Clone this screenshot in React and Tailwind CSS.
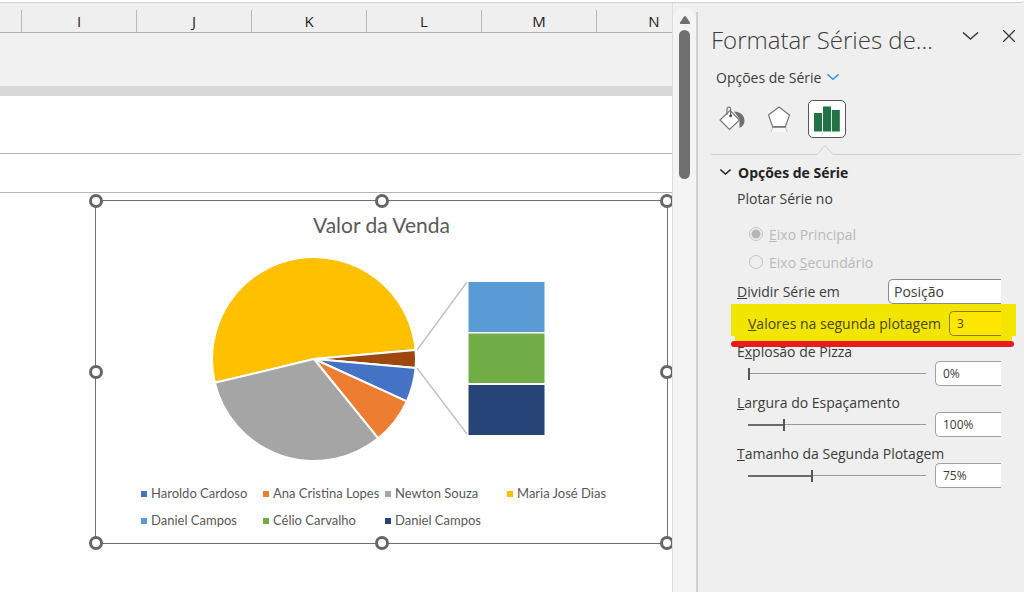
import React, { useState } from "react";

const columns = ["I", "J", "K", "L", "M", "N"];

const slices = [
  { name: "Maria José Dias", color: "#ffc000", from: 166.5, to: 355 },
  { name: "Outros", color: "#9e480e", from: -5, to: 5 },
  { name: "Haroldo Cardoso", color: "#4472c4", from: 5, to: 24.5 },
  { name: "Ana Cristina Lopes", color: "#ed7d31", from: 24.5, to: 51 },
  { name: "Newton Souza", color: "#a5a5a5", from: 51, to: 166.5 },
];

const legend = [
  { name: "Haroldo Cardoso", color: "bg-[#4472c4]" },
  { name: "Ana Cristina Lopes", color: "bg-[#ed7d31]" },
  { name: "Newton Souza", color: "bg-[#a5a5a5]" },
  { name: "Maria José Dias", color: "bg-[#ffc000]" },
  { name: "Daniel Campos", color: "bg-[#5b9bd5]" },
  { name: "Célio Carvalho", color: "bg-[#70ad47]" },
  { name: "Daniel Campos", color: "bg-[#264478]" },
];

const handles = [
  "left-0 top-0",
  "left-1/2 top-0",
  "left-full top-0",
  "left-0 top-1/2",
  "left-full top-1/2",
  "left-0 top-full",
  "left-1/2 top-full",
  "left-full top-full",
];

function slicePath(from, to) {
  const cx = 218;
  const cy = 110;
  const r = 102;
  const point = (deg) => {
    const a = (deg * Math.PI) / 180;
    return `${cx + r * Math.cos(a)} ${cy + r * Math.sin(a)}`;
  };
  const large = to - from > 180 ? 1 : 0;
  return `M${cx} ${cy} L${point(from)} A${r} ${r} 0 ${large} 1 ${point(to)} Z`;
}

function Chart() {
  return (
    <div className="relative mt-[7px] ml-[95px] mr-1 h-[344px] border border-[#707070] bg-white font-[Lato,sans-serif] text-[#595959]">
      <h2 className="mt-2 text-center text-[21px] leading-8">
        Valor da Venda
      </h2>
      <svg
        viewBox="0 0 571 220"
        className="mt-2 block h-[220px] w-full"
        role="img"
        aria-label="Valor da Venda"
      >
        {slices.map((s) => (
          <path
            key={s.name}
            d={slicePath(s.from, s.to)}
            fill={s.color}
            stroke="#fff"
            strokeWidth="2"
            strokeLinejoin="round"
          />
        ))}
        <path
          d="M321 101 L371 33 M321 119 L371 185"
          stroke="#bfbfbf"
          strokeWidth="1.3"
          fill="none"
        />
        <rect x="372.5" y="33" width="76" height="50" fill="#5b9bd5" />
        <rect x="372.5" y="84.5" width="76" height="49.5" fill="#70ad47" />
        <rect x="372.5" y="136" width="76" height="50" fill="#264478" />
      </svg>
      <ul className="ml-[45px] mt-[11px] grid grid-cols-[repeat(4,122px)] text-[13px] leading-[27px]">
        {legend.map((item, i) => (
          <li key={i} className="flex items-center gap-1 whitespace-nowrap">
            <span className={`size-[6px] shrink-0 ${item.color}`} />
            {item.name}
          </li>
        ))}
      </ul>
      {/* Selection handles */}
      {handles.map((pos) => (
        <span
          key={pos}
          className={`absolute size-[14px] -translate-1/2 rounded-full border-[3px] border-[#666] bg-white ${pos}`}
        />
      ))}
    </div>
  );
}

function Sheet() {
  return (
    <main className="min-w-0 flex-1 overflow-hidden border-r border-[#dcdcdc] bg-white">
      <div className="flex h-[30px] items-end overflow-hidden border-b border-[#b0b0b0] bg-[#efefef]">
        <div className="w-[21px] shrink-0" />
        {columns.map((c) => (
          <div
            key={c}
            className="h-[22px] w-[115px] shrink-0 border-l border-[#b8b8b8] text-center font-['Open_Sans',sans-serif] text-[15px] leading-[23px] text-[#222]"
          >
            {c}
          </div>
        ))}
      </div>
      <div className="h-[53px] bg-[#f1f1f1]" />
      <div className="h-[10px] bg-[#d8d8d8]" />
      <div className="h-[58px] border-b border-[#b5b5b5]" />
      <div className="h-[39px] border-b border-[#b5b5b5]" />
      <Chart />
    </main>
  );
}

function ScrollBar() {
  return (
    <div className="flex w-[23px] shrink-0 flex-col items-center rounded-t-xl bg-[#f4f4f4] pt-[7px]">
      <svg viewBox="0 0 12 10" className="h-[10px] w-3" fill="#707070">
        <path d="M5 1.5 Q6 0.5 7 1.5 L11 7.5 Q11.3 9 10 9 H2 Q0.7 9 1 7.5 Z" />
      </svg>
      <div className="mt-[5px] h-[149px] w-[11px] rounded-full bg-[#707070]" />
    </div>
  );
}

function Chevron({ className }) {
  return (
    <svg
      viewBox="0 0 16 8"
      className={className}
      fill="none"
      stroke="currentColor"
      strokeWidth="1.5"
    >
      <path d="M0.5 0.5 L8 7 L15.5 0.5" vectorEffect="non-scaling-stroke" />
    </svg>
  );
}

function SliderRow({ id, label, min, max, value, unit, onChange }) {
  const pct = ((value - min) / (max - min)) * 100;
  return (
    <div className="mb-2">
      <label htmlFor={id} className="block h-[18px] leading-[18px]">
        {label}
      </label>
      <div className="flex h-[25px] items-center pl-[11px]">
        <input
          id={id}
          type="range"
          min={min}
          max={max}
          value={value}
          onChange={(e) => onChange(Number(e.target.value))}
          style={{ backgroundSize: `${pct}% 2px, 100% 1px` }}
          className="h-3 min-w-0 flex-1 appearance-none bg-[linear-gradient(#6b6b6b,#6b6b6b),linear-gradient(#9a9a9a,#9a9a9a)] bg-[position:left_center] bg-no-repeat [&::-webkit-slider-thumb]:h-3 [&::-webkit-slider-thumb]:w-[2px] [&::-webkit-slider-thumb]:appearance-none [&::-webkit-slider-thumb]:bg-[#555]"
        />
        <input
          type="text"
          aria-label={id}
          value={`${value}${unit}`}
          onChange={(e) => onChange(parseInt(e.target.value) || 0)}
          className="ml-[9px] h-[25px] w-[66px] rounded-l-[5px] border border-r-0 border-[#a0a0a0] bg-white pl-[7px] text-[12px]"
        />
      </div>
    </div>
  );
}

function FormatPane() {
  const [splitBy, setSplitBy] = useState("Posição");
  const [secondPlot, setSecondPlot] = useState("3");
  const [explosion, setExplosion] = useState(0);
  const [gap, setGap] = useState(100);
  const [size, setSize] = useState(75);

  return (
    <aside className="mt-[9px] w-[328px] shrink-0 border-l-2 border-[#d0d0d0] pl-[13px] font-['Open_Sans',sans-serif] text-[14px] text-[#3b3b3b]">
      <div className="mt-[10px] flex h-9 items-center">
        <h1 className="flex-1 text-[24px] font-light leading-9">
          Formatar Séries de...
        </h1>
        <button aria-label="Opções do painel" className="mb-2 mr-6">
          <Chevron className="h-2 w-[17px]" />
        </button>
        <button aria-label="Fechar" className="mb-2 mr-[9px]">
          <svg
            viewBox="0 0 12 12"
            className="size-3"
            stroke="currentColor"
            strokeWidth="1.3"
          >
            <path d="M0 0 L12 12 M12 0 L0 12" />
          </svg>
        </button>
      </div>
      <button className="flex h-[38px] items-center gap-[6px] pl-[5px]">
        Opções de Série
        <Chevron className="h-[6px] w-3 text-[#2f96d8]" />
      </button>

      <div className="mt-1 flex h-[38px] items-center pl-2">
        <button aria-label="Preenchimento e Linha" className="mr-[21px]">
          <svg viewBox="0 0 27 26" className="h-[26px] w-[27px]" fill="none">
            <path
              d="M15 5.5 C21 5.5 25.5 9 25.5 15 C25.5 18 23.5 20.500 20.500 22 L20.500 13 Z"
              fill="#707070"
            />
            <path
              d="M11 4.5 L20.5 14 L10.500 23.500 L1 14 Z"
              fill="#fff"
              stroke="#777"
              strokeWidth="1.2"
            />
            <path
              d="M8 9 V3 Q8 1.200 9.800 1.200 Q11.600 1.200 11.600 3 V9"
              stroke="#777"
              strokeWidth="1.2"
            />
            <circle cx="11.6" cy="9.8" r="1.5" fill="#555" />
          </svg>
        </button>
        <button aria-label="Efeitos" className="mr-[17px]">
          <svg viewBox="0 0 24 28" className="h-7 w-6" fill="none">
            <path
              d="M12 2 L22.5 10 L18.5 21.5 H5.5 L1.5 10 Z"
              fill="#fff"
              stroke="#777"
              strokeWidth="1.2"
            />
            <path d="M5.5 23 H18.5 L20 27 H4 Z" fill="#f8f8f8" />
            <path
              d="M5.5 23 L4 27 M18.5 23 L20 27"
              stroke="#c4c4c4"
              strokeWidth="1"
            />
            <path d="M5 22 H19" stroke="#707070" strokeWidth="1.5" />
          </svg>
        </button>
        <button
          aria-label="Opções de Série"
          className="flex size-[38px] items-center justify-center rounded-[5px] border border-[#555] bg-white"
        >
          <svg viewBox="0 0 26 26" className="size-[26px]" fill="#217346">
            <rect x="0" y="7" width="8" height="18.5" />
            <rect x="9" y="0.5" width="8" height="25" />
            <rect x="17.8" y="4" width="8" height="21.5" />
          </svg>
        </button>
      </div>

      {/* Divider pointing at the active tab */}
      <div className="mr-[3px] mt-[7px] flex items-end">
        <span className="w-[106px] border-b border-[#d0d0d0]" />
        <svg viewBox="0 0 16 10" className="h-[10px] w-4" fill="none">
          <path d="M0 9.5 L8 0.5 L16 9.5" stroke="#d0d0d0" />
        </svg>
        <span className="flex-1 border-b border-[#d0d0d0]" />
      </div>

      <button className="mt-[5px] flex h-6 items-center gap-[7px] pl-[9px] font-bold text-[#222]">
        <Chevron className="h-[6px] w-[11px]" />
        Opções de Série
      </button>

      <div className="pl-[26px] pr-[23px]">
        <fieldset disabled>
          <legend className="h-[30px] leading-[30px]">Plotar Série no</legend>
          <div className="mt-[6px] pl-3 text-[#b9b9b9]">
            <label className="flex h-7 items-center gap-[6px]">
              <input
                type="radio"
                name="axis"
                defaultChecked
                className="size-[14px] appearance-none rounded-full border border-[#c4c4c4] checked:bg-[radial-gradient(#b5b5b5_4px,transparent_5px)]"
              />
              <span>
                <u>E</u>ixo Principal
              </span>
            </label>
            <label className="flex h-7 items-center gap-[6px]">
              <input
                type="radio"
                name="axis"
                className="size-[14px] appearance-none rounded-full border border-[#c4c4c4]"
              />
              <span>
                Eixo <u>S</u>ecundário
              </span>
            </label>
          </div>
        </fieldset>

        <div className="mt-[3px] flex h-[25px] items-center justify-between">
          <label htmlFor="split">
            <u>D</u>ividir Série em
          </label>
          <select
            id="split"
            value={splitBy}
            onChange={(e) => setSplitBy(e.target.value)}
            className="h-[25px] w-[113px] appearance-none rounded-l-[5px] border border-r-0 border-[#8a8a8a] bg-white pl-[5px]"
          >
            <option>Posição</option>
            <option>Valor</option>
            <option>Percentual</option>
          </select>
        </div>

        {/* Marker highlight over the second plot field */}
        <div className="-ml-[6px] -mr-[15px] text-[#4a4600]">
          <div className="flex h-8 items-end justify-between bg-[#f2e600] pl-[17px] pr-[15px]">
            <label htmlFor="second" className="mb-[2px]">
              <u>V</u>alores na segunda plotagem
            </label>
            <input
              id="second"
              type="text"
              value={secondPlot}
              onChange={(e) => setSecondPlot(e.target.value)}
              className="h-[25px] w-[52px] rounded-l-[5px] border border-r-0 border-[#8c7f00] bg-[#ffe600] pl-[7px] text-[12px]"
            />
          </div>
          <div className="mx-1 h-[5px] bg-[#f2e600]" />
          <div className="mr-[2px] h-[6px] rounded-full bg-[#e81b1f]" />
        </div>

        <div className="-mt-1">
          <SliderRow
            id="explosao"
            label={
              <>
                E<u>x</u>plosão de Pizza
              </>
            }
            min={0}
            max={400}
            value={explosion}
            unit="%"
            onChange={setExplosion}
          />
          <SliderRow
            id="largura"
            label={
              <>
                <u>L</u>argura do Espaçamento
              </>
            }
            min={0}
            max={500}
            value={gap}
            unit="%"
            onChange={setGap}
          />
          <SliderRow
            id="tamanho"
            label={
              <>
                <u>T</u>amanho da Segunda Plotagem
              </>
            }
            min={5}
            max={200}
            value={size}
            unit="%"
            onChange={setSize}
          />
        </div>
      </div>
    </aside>
  );
}

function App() {
  return (
    <div className="flex min-h-screen flex-col bg-[#efefef]">
      <div className="h-[3px] rounded-br-lg border-b border-[#cfcfcf] bg-white" />
      <div className="flex flex-1">
        <Sheet />
        <div className="flex pt-[5px]">
          <ScrollBar />
        </div>
        <FormatPane />
      </div>
    </div>
  );
}

export default App;
